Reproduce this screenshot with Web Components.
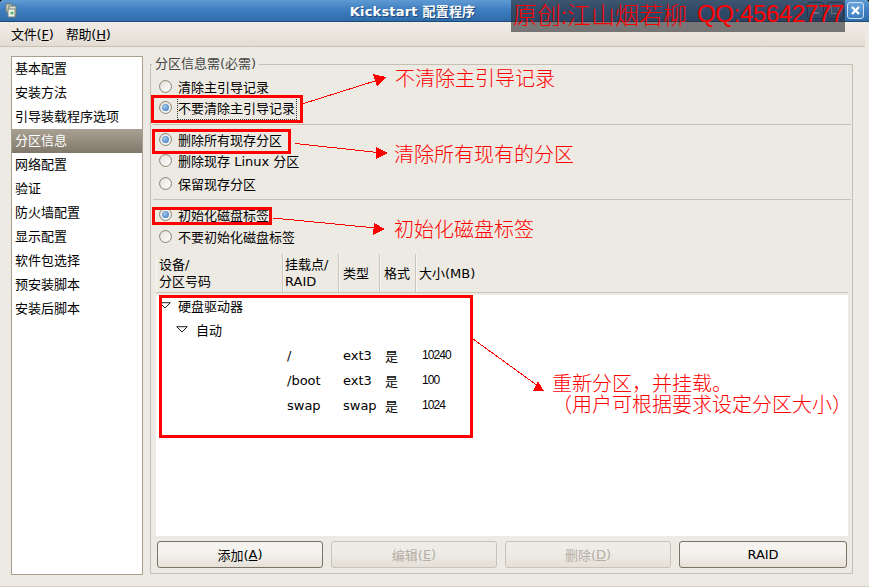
<!DOCTYPE html>
<html lang="zh">
<head>
<meta charset="utf-8">
<title>Kickstart 配置程序</title>
<style>
    html, body { margin: 0; padding: 0; background: #000; }
    body { font: 13px "DejaVu Sans", "Noto Sans CJK SC", sans-serif; color: #000; overflow: hidden; }
</style>
</head>
<body>
<kick-window>
    <kick-titlebar slot="title">Kickstart 配置程序</kick-titlebar>
    <kick-menubar slot="menu"></kick-menubar>
    <kick-sidebar slot="side" selected="3">
        <span>基本配置</span><span>安装方法</span><span>引导装载程序选项</span><span>分区信息</span>
        <span>网络配置</span><span>验证</span><span>防火墙配置</span><span>显示配置</span>
        <span>软件包选择</span><span>预安装脚本</span><span>安装后脚本</span>
    </kick-sidebar>
    <kick-partition slot="main"></kick-partition>
    <kick-annotations slot="over">
        <kick-note style="left:395px;top:68px">不清除主引导记录</kick-note>
        <kick-note style="left:394px;top:144px">清除所有现有的分区</kick-note>
        <kick-note style="left:394px;top:219px">初始化磁盘标签</kick-note>
        <kick-note style="left:552px;top:373px">重新分区&#xFF0C;并挂载。</kick-note>
        <kick-note style="left:552px;top:394px">&#xFF08;用户可根据要求设定分区大小&#xFF09;</kick-note>
    </kick-annotations>
    <kick-watermark slot="over"></kick-watermark>
</kick-window>

<script>
const FONT = '"DejaVu Sans", "Noto Sans CJK SC", sans-serif';

class KickWindow extends HTMLElement {
    constructor() {
        super();
        this.attachShadow({ mode: 'open' });
        this.shadowRoot.innerHTML = `
            <style>
                :host { display: flex; flex-direction: column; position: relative; width: 869px; height: 587px;
                        box-sizing: border-box; background: #edeae3; font: 13px ${FONT}; overflow: hidden;
                        border-radius: 4px 4px 0 0; border-bottom: 1px solid #d6d1c8; }
                .body { display: flex; gap: 7px; height: 519px; padding: 9px 0 0 11px; }
            </style>
            <slot name="title"></slot>
            <slot name="menu"></slot>
            <div class="body"><slot name="side"></slot><slot name="main"></slot></div>
            <slot name="over"></slot>
        `;
    }
}

class KickTitlebar extends HTMLElement {
    constructor() {
        super();
        this.attachShadow({ mode: 'open' });
        this.shadowRoot.innerHTML = `
            <style>
                :host { display: flex; align-items: center; height: 22px; flex: none; padding: 0 5px 0 5px; box-sizing: border-box;
                        background: linear-gradient(#5f9ad3, #3f7fc0 45%, #2f6cab); border-bottom: 1px solid #1f4a78; color: #fff; }
                svg { flex: none; display: block; }
                .text { flex: 1; text-align: center; font-weight: bold; font-size: 13px; letter-spacing: .2px;
                        text-shadow: 1px 1px 0 #1f4a78; }
                .btns { display: flex; gap: 3px; }
                .btn { width: 17px; height: 17px; box-sizing: border-box; border: 1px solid #1f4a78; border-radius: 3px;
                       background: linear-gradient(#5f9ad3, #3a75b3); display: flex; align-items: center; justify-content: center; }
                .close { background: linear-gradient(#6aa5dc, #3f7fc0); border-color: #cfe0f2; }
            </style>
            <svg width="13" height="15" viewBox="0 0 13 15">
                <rect x="1" y="1" width="6" height="8" fill="#cfd3c8" stroke="#6f7a70"/>
                <rect x="4" y="3" width="7" height="9" fill="#dfe3da" stroke="#6f7a70"/>
                <rect x="3" y="6" width="7" height="8" fill="#eef0ea" stroke="#7c867c"/>
                <circle cx="7" cy="10" r="1.6" fill="#58b070"/>
            </svg>
            <span class="text"><slot></slot></span>
            <div class="btns">
                <div class="btn"><svg width="9" height="9"><rect x="1" y="6" width="7" height="2" fill="#c9d6e2"/></svg></div>
                <div class="btn"><svg width="9" height="9"><rect x=".5" y=".5" width="7" height="7" fill="none" stroke="#c9d6e2"/></svg></div>
                <div class="btn close"><svg width="11" height="11"><path d="M2 2l7 7M9 2l-7 7" stroke="#fff" stroke-width="2.4"/></svg></div>
            </div>
        `;
    }
}

class KickMenubar extends HTMLElement {
    constructor() {
        super();
        this.attachShadow({ mode: 'open' });
        this.shadowRoot.innerHTML = `
            <style>
                :host { display: flex; gap: 12px; align-items: center; flex: none; height: 25px; width: 865px; box-sizing: border-box; padding: 0 0 1px 11px;
                        background: linear-gradient(#f0ece6, #e3ddd4); border-bottom: 1px solid #c8c2b6; letter-spacing: -.2px; }
            </style>
            <span>文件(<u>F</u>)</span><span>帮助(<u>H</u>)</span>
        `;
    }
}

class KickSidebar extends HTMLElement {
    constructor() {
        super();
        this.attachShadow({ mode: 'open' });
        this.shadowRoot.innerHTML = `
            <style>
                :host { display: flex; flex-direction: column; flex: none; width: 132px; height: 519px; box-sizing: border-box;
                        background: #fff; border: 1px solid #a89f8f; }
                ::slotted(span) { display: block; height: 24px; line-height: 24px; padding-left: 3px; white-space: nowrap; }
                ::slotted(span.on) { color: #fff; background: linear-gradient(#a9a194, #80786a); }
            </style>
            <slot></slot>
        `;
    }

    connectedCallback() {
        const items = this.querySelectorAll('span');
        const on = items[Number(this.getAttribute('selected'))];
        if (on) on.classList.add('on');
    }
}

class KickRadio extends HTMLElement {
    constructor() {
        super();
        this.attachShadow({ mode: 'open' });
        this.shadowRoot.innerHTML = `
            <style>
                :host { display: flex; align-items: center; gap: 5px; height: 21px; box-sizing: border-box; padding: 0 0 2px 3px; white-space: nowrap; }
                .dot { width: 13px; height: 13px; flex: none; box-sizing: border-box; border-radius: 50%; margin-right: 1px;
                       border: 1px solid #8f887a; background: linear-gradient(135deg, #e6e2da, #fff); display: flex;
                       align-items: center; justify-content: center; box-shadow: inset 0 0 1px #bbb; }
                :host([checked]) .dot::after { content: ""; width: 7px; height: 7px; border-radius: 50%;
                       background: radial-gradient(circle at 40% 40%, #a9ccee, #3f7fc0 80%); }
                .label { padding: 2px 0; border: 1px solid transparent; margin-left: -1px; }
                :host([focused]) .label { border: 1px dotted #333; padding: 2px 1px 2px 0; }
            </style>
            <span class="dot"></span><span class="label"><slot></slot></span>
        `;
    }
}

class KickButton extends HTMLElement {
    constructor() {
        super();
        this.attachShadow({ mode: 'open' });
        this.shadowRoot.innerHTML = `
            <style>
                :host { display: flex; align-items: center; justify-content: center; height: 27px; box-sizing: border-box;
                        border: 1px solid #7a7264; border-radius: 3px; background: linear-gradient(#f5f3ef 40%, #e5e1d9); }
                :host([disabled]) { color: #b3aea5; border-color: #c8c3b9; background: linear-gradient(#efece7 40%, #e4e0d8); }
            </style>
            <slot></slot>
        `;
    }
}

class KickTree extends HTMLElement {
    constructor() {
        super();
        this.attachShadow({ mode: 'open' });
        const tri = `<svg width="12" height="7" viewBox="0 0 12 7"><path d="M.7.7h10.6L6 6z" fill="#fff" stroke="#222"/></svg>`;
        const row = (m, t, f, s) => `<div class="row"><span></span><span>${m}</span><span>${t}</span><span>${f}</span><span class="num">${s}</span></div>`;
        this.shadowRoot.innerHTML = `
            <style>
                :host { display: flex; flex-direction: column; flex: 1; min-height: 0; }
                .head { display: grid; grid-template-columns: 127px 56px 41px 36px 1fr; height: 39px; flex: none; box-sizing: border-box;
                        border-bottom: 1px solid #c9c4ba; line-height: 17px; }
                .head span { display: flex; align-items: center; padding-left: 3px; border-right: 1px solid #cbc6bc; box-shadow: inset 1px 0 0 #f8f6f2; }
                .head span:nth-child(3), .head span:nth-child(4) { padding-left: 4px; }
                .head span:nth-child(2) { padding-left: 2px; }
                .head span:last-child { border-right: 0; }
                .list { flex: 1; background: #fff; margin-top: 2px; }
                .line { display: flex; align-items: center; height: 24.5px; box-sizing: border-box; padding-bottom: 4px; gap: 7px; }
                .line.a { padding-left: 3px; }
                .line.b { padding-left: 20px; gap: 8px; }
                .row { display: grid; grid-template-columns: 131px 56px 42px 37px 1fr; height: 25px; box-sizing: border-box; padding-bottom: 3px; align-items: center; }
                .num { font-family: "Liberation Sans", sans-serif; font-size: 12px; letter-spacing: -.9px; }
            </style>
            <div class="head">
                <span>设备/<br>分区号码</span><span>挂载点/<br>RAID</span><span>类型</span><span>格式</span><span>大小(MB)</span>
            </div>
            <div class="list">
                <div class="line a">${tri}<span>硬盘驱动器</span></div>
                <div class="line b">${tri}<span>自动</span></div>
                ${row('/', 'ext3', '是', '10240')}
                ${row('/boot', 'ext3', '是', '100')}
                ${row('swap', 'swap', '是', '1024')}
            </div>
        `;
    }
}

class KickPartition extends HTMLElement {
    constructor() {
        super();
        this.attachShadow({ mode: 'open' });
        this.shadowRoot.innerHTML = `
            <style>
                :host { display: block; flex: none; width: 703px; height: 518px; }
                fieldset { box-sizing: border-box; width: 100%; height: 100%; margin: 0; padding: 5px 4px 5px 5px;
                           border: 1px solid #c4c0b6; display: flex; flex-direction: column; min-width: 0; }
                legend { margin-left: -4px; padding: 0 3px; height: 16px; line-height: 16px; color: #444; }
                hr { border: 0; height: 1px; background: #c4c0b6; margin: 0 -3px; flex: none; }
                .btns { display: grid; grid-template-columns: 166px 166px 166px 168px; gap: 8px; padding: 5px 1px 0; flex: none; }
            </style>
            <fieldset>
                <legend>分区信息需(必需)</legend>
                <kick-radio>清除主引导记录</kick-radio>
                <kick-radio checked focused>不要清除主引导记录</kick-radio>
                <hr style="margin-top:5px">
                <kick-radio checked style="margin-top:5px">删除所有现存分区</kick-radio>
                <kick-radio>删除现存 Linux 分区</kick-radio>
                <kick-radio style="margin-top:2px">保留现存分区</kick-radio>
                <hr style="margin-top:4px">
                <kick-radio checked style="margin-top:5px">初始化磁盘标签</kick-radio>
                <kick-radio style="margin-top:1px">不要初始化磁盘标签</kick-radio>
                <kick-tree style="margin-top:6px"></kick-tree>
                <div class="btns">
                    <kick-button>添加(<u>A</u>)</kick-button>
                    <kick-button disabled>编辑(<u>E</u>)</kick-button>
                    <kick-button disabled>删除(<u>D</u>)</kick-button>
                    <kick-button>RAID</kick-button>
                </div>
            </fieldset>
        `;
    }
}

class KickAnnotations extends HTMLElement {
    constructor() {
        super();
        this.attachShadow({ mode: 'open' });
        const box = (x, y, w, h) => `<rect x="${x + 1.5}" y="${y + 1.5}" width="${w - 3}" height="${h - 3}"/>`;
        this.shadowRoot.innerHTML = `
            <style>
                :host { position: absolute; inset: 0; display: block; pointer-events: none; }
                svg { position: absolute; left: 0; top: 0; }
                .box rect { fill: none; stroke: #f00; stroke-width: 3; }
                .arrow { stroke: #f00; fill: none; }
                .head { fill: #f00; }
            </style>
            <svg width="869" height="587" shape-rendering="crispEdges">
                <g class="box">
                    ${box(151, 95, 152, 28)}
                    ${box(152, 129, 139, 25)}
                    ${box(152, 207, 120, 18)}
                    ${box(159, 295, 314, 143)}
                </g>
                <path class="arrow" d="M302 104L378 80M295 143.500L378 152.500M273 218L376 228M473 339L538 386"/>
                <polygon class="head" points="386,77 373,74 377,86"/>
                <polygon class="head" points="388,153 376,147 376,159"/>
                <polygon class="head" points="385,229 374,223 373,235"/>
                <polygon class="head" points="538,381 544,391 533,391"/>
            </svg>
            <slot></slot>
        `;
    }
}

class KickNote extends HTMLElement {
    constructor() {
        super();
        this.attachShadow({ mode: 'open' });
        this.shadowRoot.innerHTML = `
            <style>
                :host { position: absolute; display: block; white-space: nowrap; color: #f00;
                        font: 300 20px/20px "Noto Sans CJK SC", sans-serif; }
            </style>
            <slot></slot>
        `;
    }
}

class KickWatermark extends HTMLElement {
    constructor() {
        super();
        this.attachShadow({ mode: 'open' });
        this.shadowRoot.innerHTML = `
            <style>
                :host { position: absolute; left: 511px; top: 0; width: 334px; height: 32px; box-sizing: border-box; padding: 0 0 4px 2px;
                        display: flex; align-items: center; gap: 10px; white-space: nowrap; color: #f00;
                        background: rgba(40, 40, 45, .6); font: 300 24px/28px "Noto Sans CJK SC", sans-serif; }
                .qq { font-family: "Liberation Sans", sans-serif; letter-spacing: -.35px; }
            </style>
            <span>原创:江山烟若柳</span><span class="qq">QQ:45642777</span>
        `;
    }
}

customElements.define('kick-window', KickWindow);
customElements.define('kick-titlebar', KickTitlebar);
customElements.define('kick-menubar', KickMenubar);
customElements.define('kick-sidebar', KickSidebar);
customElements.define('kick-radio', KickRadio);
customElements.define('kick-button', KickButton);
customElements.define('kick-tree', KickTree);
customElements.define('kick-partition', KickPartition);
customElements.define('kick-annotations', KickAnnotations);
customElements.define('kick-note', KickNote);
customElements.define('kick-watermark', KickWatermark);
</script>
</body>
</html>
